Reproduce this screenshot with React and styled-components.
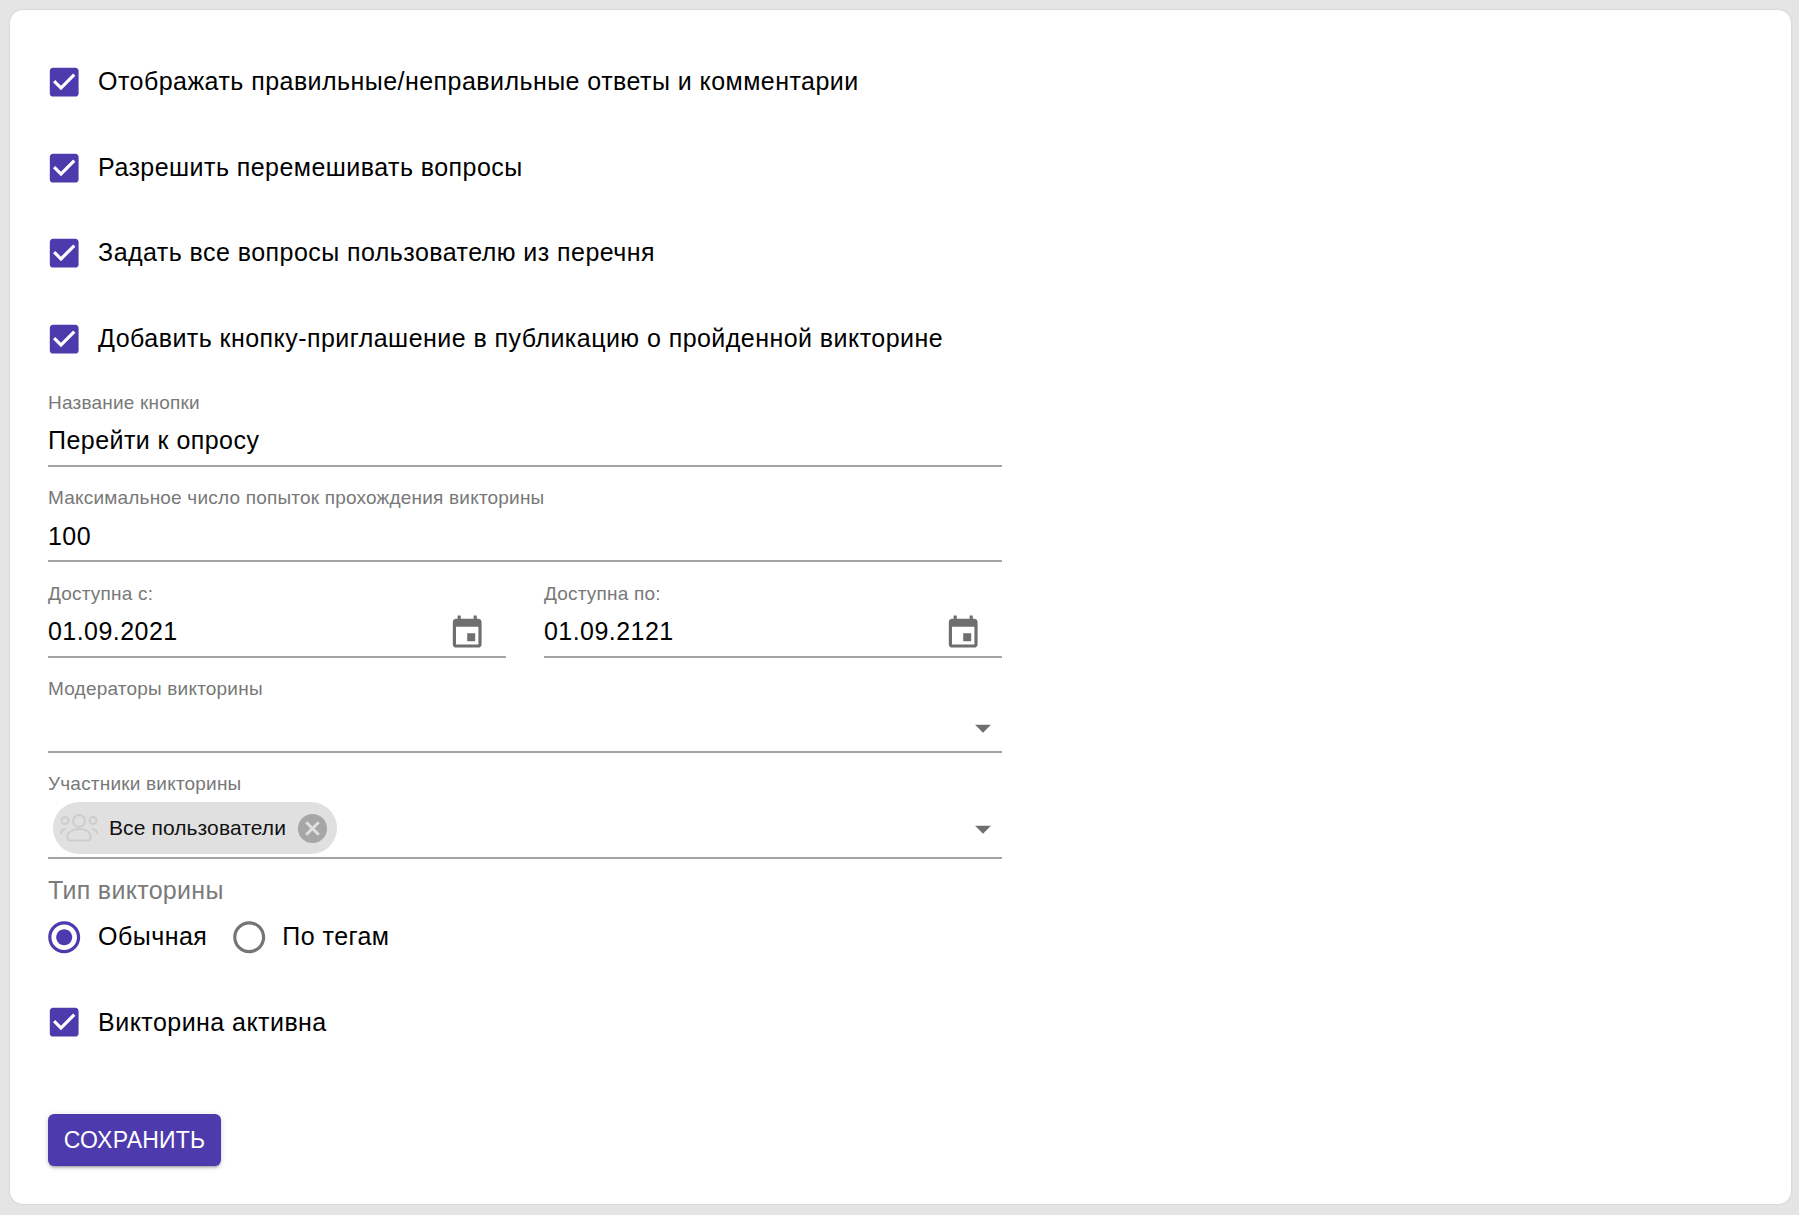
import React from "react";
import styled, { createGlobalStyle } from "styled-components";

const Global = createGlobalStyle`
  * { box-sizing: border-box; }
  html, body { margin: 0; padding: 0; background: #e5e5e5; }
  body { font-family: "Liberation Sans", Arial, sans-serif; color: #000; }
`;
const Page = styled.div`
  padding: 10px 8px 11px 10px;
  height: 1215px;
`;
const Card = styled.main`
  height: 1194px;
  background: #fff;
  border-radius: 13px;
  box-shadow: 0 0 2px rgba(170, 185, 200, 0.8);
  padding: 29px 38px 0;
`;
const Form = styled.form`
  width: 954px;
  display: flex;
  flex-direction: column;
`;
const Row = styled.label`
  height: 85.8px;
  display: flex;
  align-items: center;
  gap: 14.3px;
  flex: none;
`;
const Control = styled.span`
  width: 38.4px;
  height: 38.4px;
  margin-left: -2.6px;
  flex: none;
  display: block;
  svg { display: block; width: 38.4px; height: 38.4px; fill: ${(p) => p.$color}; }
`;
const LabelText = styled.span`
  font-size: 25px;
  letter-spacing: 0.45px;
  line-height: 30px;
  padding-bottom: 2px;
`;
const Field = styled.div`
  height: ${(p) => p.$h || 95.4}px;
  flex: ${(p) => (p.$grow ? "1 1 0" : "none")};
  display: flex;
  flex-direction: column;
  justify-content: flex-end;
  border-bottom: 2px solid #a3a3a3;
  min-width: 0;
`;
const Caption = styled.div`
  font-size: 19px;
  line-height: 22px;
  height: 22px;
  margin-bottom: ${(p) => p.$gap || 3}px;
  color: #787878;
  letter-spacing: 0.2px;
`;
const Value = styled.div`
  height: ${(p) => p.$h || 48}px;
  display: flex;
  align-items: center;
  justify-content: space-between;
  font-size: 25px;
  letter-spacing: 0.45px;
`;
const Grid = styled.div`
  display: flex;
  gap: 38px;
`;
const Calendar = styled.svg`
  width: 38.4px;
  height: 38.4px;
  fill: #6f6f6f;
  flex: none;
  display: block;
  margin: 3px 20px 0 0;
`;
const Caret = styled.svg`
  width: 38px;
  height: 38px;
  fill: #6f6f6f;
  flex: none;
  display: block;
  margin: 1px 0 0 0;
`;
const Chip = styled.div`
  height: 52px;
  margin-left: 5px;
  width: 284px;
  border-radius: 26px;
  background: #e0e0e0;
  display: flex;
  align-items: center;
  padding-left: 7px;
  font-size: 21px;
  letter-spacing: 0.1px;
  color: #111;
`;
const ChipText = styled.span`
  margin-left: 11px;
  white-space: nowrap;
`;
const ChipClose = styled.svg`
  width: 35px;
  height: 35px;
  fill: #a6a6a6;
  margin-left: auto;
  margin-right: 7.5px;
  flex: none;
`;
const GroupGlyph = styled.svg`
  width: 38px;
  height: 28px;
  flex: none;
  fill: none;
  stroke: #cdcdcd;
  stroke-width: 2;
  stroke-linejoin: round;
`;
const GroupTitle = styled.div`
  font-size: 25px;
  color: #7b7b7b;
  letter-spacing: 0.3px;
  line-height: 30px;
  margin-top: 16px;
`;
const Radios = styled.div`
  display: flex;
  align-items: center;
  height: 61.5px;
  margin-top: 1px;
`;
const RadioLabel = styled.label`
  display: flex;
  align-items: center;
  gap: 14.3px;
  margin-right: 25px;
`;
const ActiveRow = styled(Row)`
  margin-top: 12px;
`;
const Save = styled.button`
  align-self: flex-start;
  margin-top: 48.2px;
  width: 173px;
  height: 52px;
  border: 0;
  border-radius: 6px;
  background: #4d3aad;
  color: #fff;
  font: 400 23px "Liberation Sans", Arial, sans-serif;
  letter-spacing: 0.2px;
  padding: 2px 0 0;
  box-shadow: 0 3px 2px -2px rgba(0,0,0,.2), 0 2px 3px rgba(0,0,0,.14), 0 1px 6px rgba(0,0,0,.12);
`;

const CHECK = "M19 3H5c-1.11 0-2 .9-2 2v14c0 1.1.89 2 2 2h14c1.11 0 2-.9 2-2V5c0-1.1-.89-2-2-2zm-9 14l-5-5 1.41-1.41L10 14.17l7.59-7.59L19 8l-9 9z";
const CAL = "M17 12h-5v5h5v-5zM16 1v2H8V1H6v2H5c-1.11 0-1.99.9-1.99 2L3 19c0 1.1.89 2 2 2h14c1.1 0 2-.9 2-2V5c0-1.1-.9-2-2-2h-1V1h-2zm3 18H5V8h14v11z";
const CANCEL = "M12 2C6.47 2 2 6.47 2 12s4.47 10 10 10 10-4.47 10-10S17.53 2 12 2zm5 13.59L15.59 17 12 13.41 8.41 17 7 15.59 10.59 12 7 8.41 8.41 7 12 10.59 15.59 7 17 8.41 13.41 12 17 15.59z";
const RING = "M12 2C6.48 2 2 6.48 2 12s4.48 10 10 10 10-4.48 10-10S17.52 2 12 2zm0 18c-4.42 0-8-3.58-8-8s3.58-8 8-8 8 3.58 8 8-3.58 8-8 8z";
const DOT = "M12 7c-2.76 0-5 2.24-5 5s2.24 5 5 5 5-2.24 5-5-2.24-5-5-5z";

const CheckRow = ({ children, as }) => {
  const R = as || Row;
  return (
    <R>
      <Control $color="#4d3aad"><svg viewBox="0 0 24 24"><path d={CHECK} /></svg></Control>
      <LabelText>{children}</LabelText>
    </R>
  );
};
const Down = () => (
  <Caret viewBox="0 0 24 24"><path d="M7 10l5 5 5-5z" /></Caret>
);
const Cal = () => (
  <Calendar viewBox="0 0 24 24"><path d={CAL} /></Calendar>
);

export default function App() {
  return (
    <Page>
      <Global />
      <Card>
        <Form>
          <CheckRow>Отображать правильные/неправильные ответы и комментарии</CheckRow>
          <CheckRow>Разрешить перемешивать вопросы</CheckRow>
          <CheckRow>Задать все вопросы пользователю из перечня</CheckRow>
          <CheckRow>Добавить кнопку-приглашение в публикацию о пройденной викторине</CheckRow>
          <Field $h={84.8}>
            <Caption>Название кнопки</Caption>
            <Value>Перейти к опросу</Value>
          </Field>
          <Field>
            <Caption>Максимальное число попыток прохождения викторины</Caption>
            <Value>100</Value>
          </Field>
          <Grid>
            <Field $grow>
              <Caption>Доступна с:</Caption>
              <Value>01.09.2021<Cal /></Value>
            </Field>
            <Field $grow>
              <Caption>Доступна по:</Caption>
              <Value>01.09.2121<Cal /></Value>
            </Field>
          </Grid>
          <Field>
            <Caption>Модераторы викторины</Caption>
            <Value><span /><Down /></Value>
          </Field>
          <Field $h={106}>
            <Caption $gap={4}>Участники викторины</Caption>
            <Value $h={58}>
              <Chip>
                <GroupGlyph viewBox="0 0 38 28">
                  <circle cx="19" cy="7" r="6" />
                  <circle cx="5" cy="6.5" r="3.5" />
                  <circle cx="33" cy="6.5" r="3.5" />
                  <path d="M7.5 24v-2c0-4 5-7 11.5-7s11.5 3 11.5 7v2q0 2.5-2.5 2.5H10q-2.5 0-2.5-2.5z" />
                  <path d="M1 20c0-3 2-5 5-5M37 20c0-3-2-5-5-5" />
                </GroupGlyph>
                <ChipText>Все пользователи</ChipText>
                <ChipClose viewBox="0 0 24 24"><path d={CANCEL} /></ChipClose>
              </Chip>
              <Down />
            </Value>
          </Field>
          <GroupTitle>Тип викторины</GroupTitle>
          <Radios>
            <RadioLabel>
              <Control $color="#4d3aad"><svg viewBox="0 0 24 24"><path d={RING} /><path d={DOT} /></svg></Control>
              <LabelText>Обычная</LabelText>
            </RadioLabel>
            <RadioLabel>
              <Control $color="#757575"><svg viewBox="0 0 24 24"><path d={RING} /></svg></Control>
              <LabelText>По тегам</LabelText>
            </RadioLabel>
          </Radios>
          <CheckRow as={ActiveRow}>Викторина активна</CheckRow>
          <Save type="button">СОХРАНИТЬ</Save>
        </Form>
      </Card>
    </Page>
  );
}
